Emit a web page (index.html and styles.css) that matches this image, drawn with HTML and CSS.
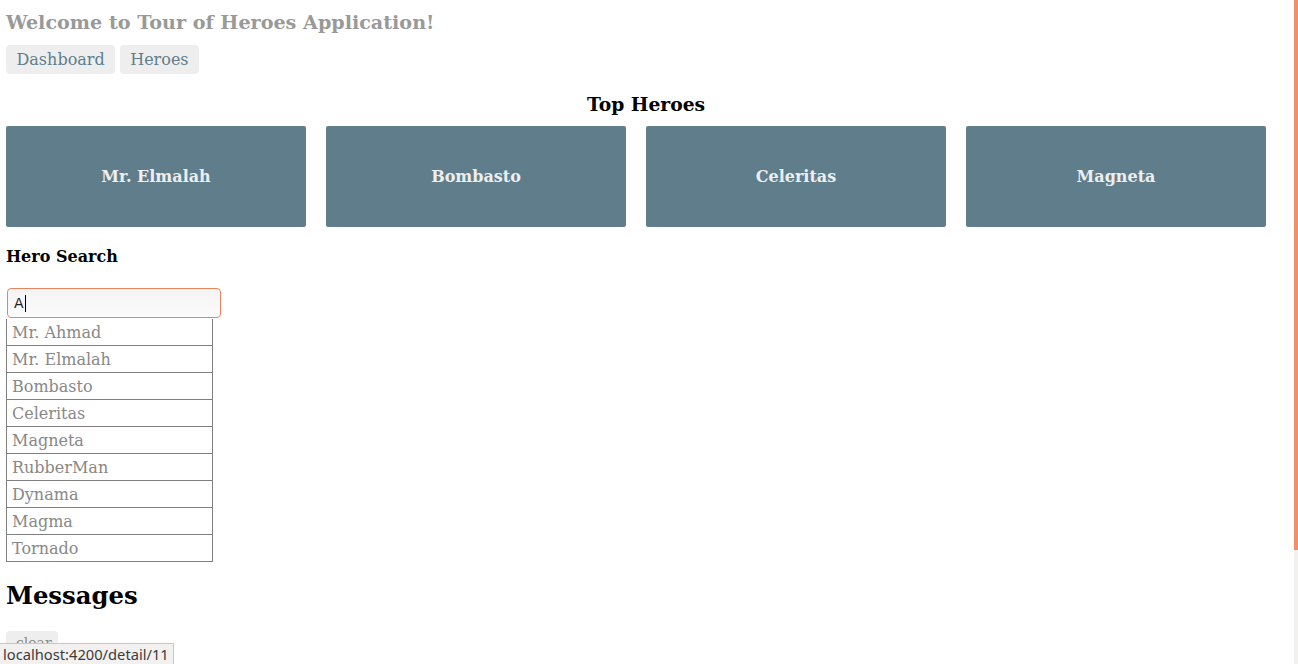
FILE: index.html
```html
<!DOCTYPE html>
<html>
<head>
<meta charset="utf-8">
<link rel="stylesheet" href="styles.css">
</head>
<body>
<div class="app">
  <h1 class="title">Welcome to Tour of Heroes Application!</h1>
  <nav class="nav">
    <a class="nav-btn">Dashboard</a>
    <a class="nav-btn">Heroes</a>
  </nav>
  <h3 class="top-title">Top Heroes</h3>
  <div class="grid">
    <div class="card"><h4>Mr. Elmalah</h4></div>
    <div class="card"><h4>Bombasto</h4></div>
    <div class="card"><h4>Celeritas</h4></div>
    <div class="card"><h4>Magneta</h4></div>
  </div>
  <div class="search">
    <h4 class="search-title">Hero Search</h4>
    <div class="search-box"><span class="typed">A</span><span class="caret"></span></div>
    <ul class="results">
      <li>Mr. Ahmad</li>
      <li>Mr. Elmalah</li>
      <li>Bombasto</li>
      <li>Celeritas</li>
      <li>Magneta</li>
      <li>RubberMan</li>
      <li>Dynama</li>
      <li>Magma</li>
      <li>Tornado</li>
    </ul>
  </div>
  <h2 class="messages">Messages</h2>
  <button class="clear">clear</button>
</div>
<div class="statusbar">localhost:4200/detail/11</div>
<div class="scrollbar"><div class="thumb"></div></div>
</body>
</html>
```
FILE: styles.css
```css
html, body {
  margin: 0;
  padding: 0;
  overflow: hidden;
  height: 664px;
  background: #fff;
}
body {
  font-family: "DejaVu Serif", serif;
}
.app {
  width: 1280px;
  margin-left: 6px;
}
.title {
  margin: 11px 0 0 0;
  font-size: 19.15px;
  line-height: 23px;
  font-weight: bold;
  color: #999999;
}
.nav {
  display: flex;
  gap: 5px;
  margin-top: 11px;
}
.nav-btn {
  display: block;
  padding: 5px 10px 5px 10.5px;
  line-height: 19px;
  font-size: 16px;
  background: #eeeeee;
  color: #607d8b;
  border-radius: 4px;
}
.top-title {
  margin: 19px 0 0 0;
  text-align: center;
  font-size: 18.72px;
  line-height: 22px;
  color: #000;
}
.grid {
  display: flex;
  gap: 20px;
  margin-top: 11px;
}
.card {
  width: 300px;
  height: 101px;
  background: #607d8b;
  border-radius: 2px;
  display: flex;
  align-items: center;
  justify-content: center;
}
.card h4 {
  margin: 0;
  font-size: 16px;
  color: #eeeeee;
}
.search-title {
  margin: 20px 0 0 0;
  font-size: 16px;
  line-height: 20px;
}
.search-box {
  margin-top: 21px;
  margin-left: 1px;
  box-sizing: border-box;
  width: 214px;
  height: 30px;
  border: 1px solid #e9855e;
  border-radius: 4px;
  background: linear-gradient(#f4f4f4, #fbfbfb);
  display: flex;
  align-items: center;
  padding-left: 6px;
  font-family: "DejaVu Sans", sans-serif;
  font-size: 14px;
  color: #222;
}
.caret {
  display: inline-block;
  width: 1px;
  height: 17px;
  background: #000;
  margin-left: 1px;
}
.results {
  list-style: none;
  margin: 0;
  padding: 1px 0 0 0;
  width: 207px;
  box-sizing: border-box;
}
.results li {
  box-sizing: border-box;
  height: 27px;
  padding-top: 2px;
  line-height: 24px;
  border: 1px solid #808080;
  border-top: none;
  padding-left: 5px;
  color: #888888;
  font-size: 16px;
}
.messages {
  margin: 20px 0 0 0;
  font-size: 24.3px;
  line-height: 28px;
}
.clear {
  display: block;
  margin-top: 21px;
  font-family: "DejaVu Serif", serif;
  font-size: 14px;
  background: #eeeeee;
  color: #888;
  border: none;
  border-radius: 4px;
  padding: 2px 10px 8px 10px;
  width: 52px;
  height: 30px;
}
.statusbar {
  position: fixed;
  left: 0;
  bottom: 0;
  height: 20px;
  padding: 0 4px 0 3px;
  background: #f2f1f0;
  border-top: 1px solid #c9c7c4;
  border-right: 1px solid #c9c7c4;
  font-family: "Noto Sans", "DejaVu Sans", sans-serif;
  font-size: 14.7px;
  line-height: 20px;
  color: #3c3c3c;
}
.scrollbar {
  position: fixed;
  top: 0;
  right: 0;
  width: 4px;
  height: 664px;
  background: #f3f1ef;
}
.thumb {
  height: 550px;
  background: #f0906a;
}
```
